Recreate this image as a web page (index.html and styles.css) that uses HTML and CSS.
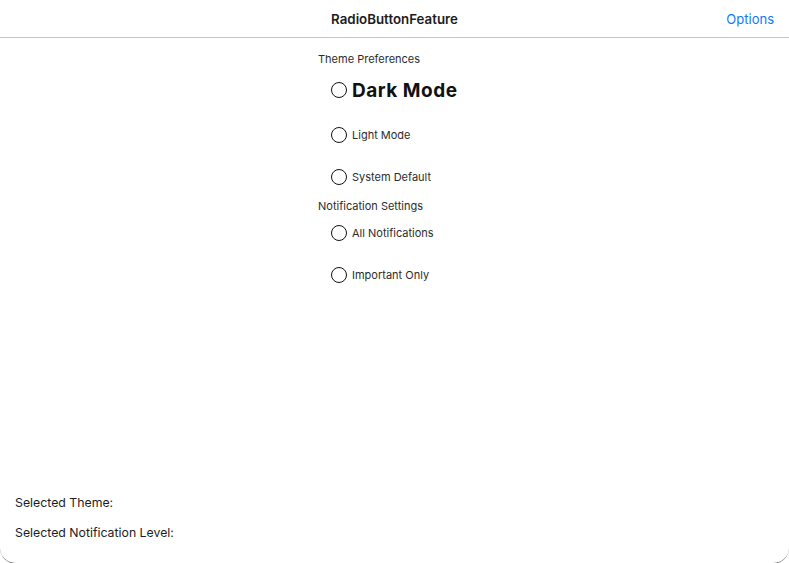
FILE: index.html
```html
<!DOCTYPE html>
<html>
<head>
<meta charset="utf-8">
<link rel="stylesheet" href="styles.css">
</head>
<body>
<div class="window">
  <header class="navbar">
    <div class="nav-title">RadioButtonFeature</div>
    <div class="nav-action">Options</div>
  </header>
  <main class="content">
    <div class="group-title">Theme Preferences</div>
    <div class="radio-row radio-large"><span class="radio"></span><span class="label">Dark Mode</span></div>
    <div class="radio-row"><span class="radio"></span><span class="label">Light Mode</span></div>
    <div class="radio-row"><span class="radio"></span><span class="label">System Default</span></div>
    <div class="group-title group-gap">Notification Settings</div>
    <div class="radio-row"><span class="radio"></span><span class="label">All Notifications</span></div>
    <div class="radio-row"><span class="radio"></span><span class="label">Important Only</span></div>
  </main>
  <footer class="summary">
    <div class="summary-line">Selected Theme:</div>
    <div class="summary-line">Selected Notification Level:</div>
  </footer>
</div>
</body>
</html>
```
FILE: styles.css
```css
html, body {
  margin: 0;
  padding: 0;
  height: 100%;
  background: #ffffff;
}
body {
  font-family: Inter, "Noto Sans", "Liberation Sans", sans-serif;
  color: #1c1c1e;
  overflow: hidden;
}
.window {
  height: calc(100vh + 1px);
  box-sizing: border-box;
  display: flex;
  flex-direction: column;
  border-bottom: 1px solid #8a8a8a;
  border-radius: 0 0 16px 16px;
}
.navbar {
  height: 37px;
  border-bottom: 1px solid #c6c6c8;
  display: flex;
  align-items: center;
  justify-content: center;
  position: relative;
  flex: none;
}
.nav-title {
  font-size: 13.3px;
  font-weight: 600;
  color: #1c1c1e;
}
.nav-action {
  position: absolute;
  right: 15px;
  top: 0;
  bottom: 0;
  display: flex;
  align-items: center;
  font-size: 13px;
  color: #0a7aff;
}
.content {
  flex: 1;
  padding: 14px 0 0 318px;
  display: flex;
  flex-direction: column;
  align-items: flex-start;
}
.group-title {
  font-size: 11px;
  line-height: 14px;
  color: #2c2c2e;
}
.group-gap {
  padding-top: 1px;
  margin-bottom: -1px;
}
.radio-row {
  display: flex;
  align-items: center;
  gap: 5px;
  padding: 12px 0 12px 13px;
  height: 18px;
}
.radio-large {
  height: 24px;
}
.radio {
  width: 16px;
  height: 16px;
  box-sizing: border-box;
  border: 1.5px solid #111;
  border-radius: 50%;
  flex: none;
}
.label {
  font-size: 11px;
  color: #2c2c2e;
}
.radio-large .label {
  font-size: 19px;
  font-weight: 700;
  color: #111;
  letter-spacing: 0.5px;
}
.summary {
  flex: none;
  padding: 0 0 22px 15px;
  display: flex;
  flex-direction: column;
  gap: 14px;
}
.summary-line {
  font-size: 12.3px;
  line-height: 16px;
  color: #1c1c1e;
}
```
